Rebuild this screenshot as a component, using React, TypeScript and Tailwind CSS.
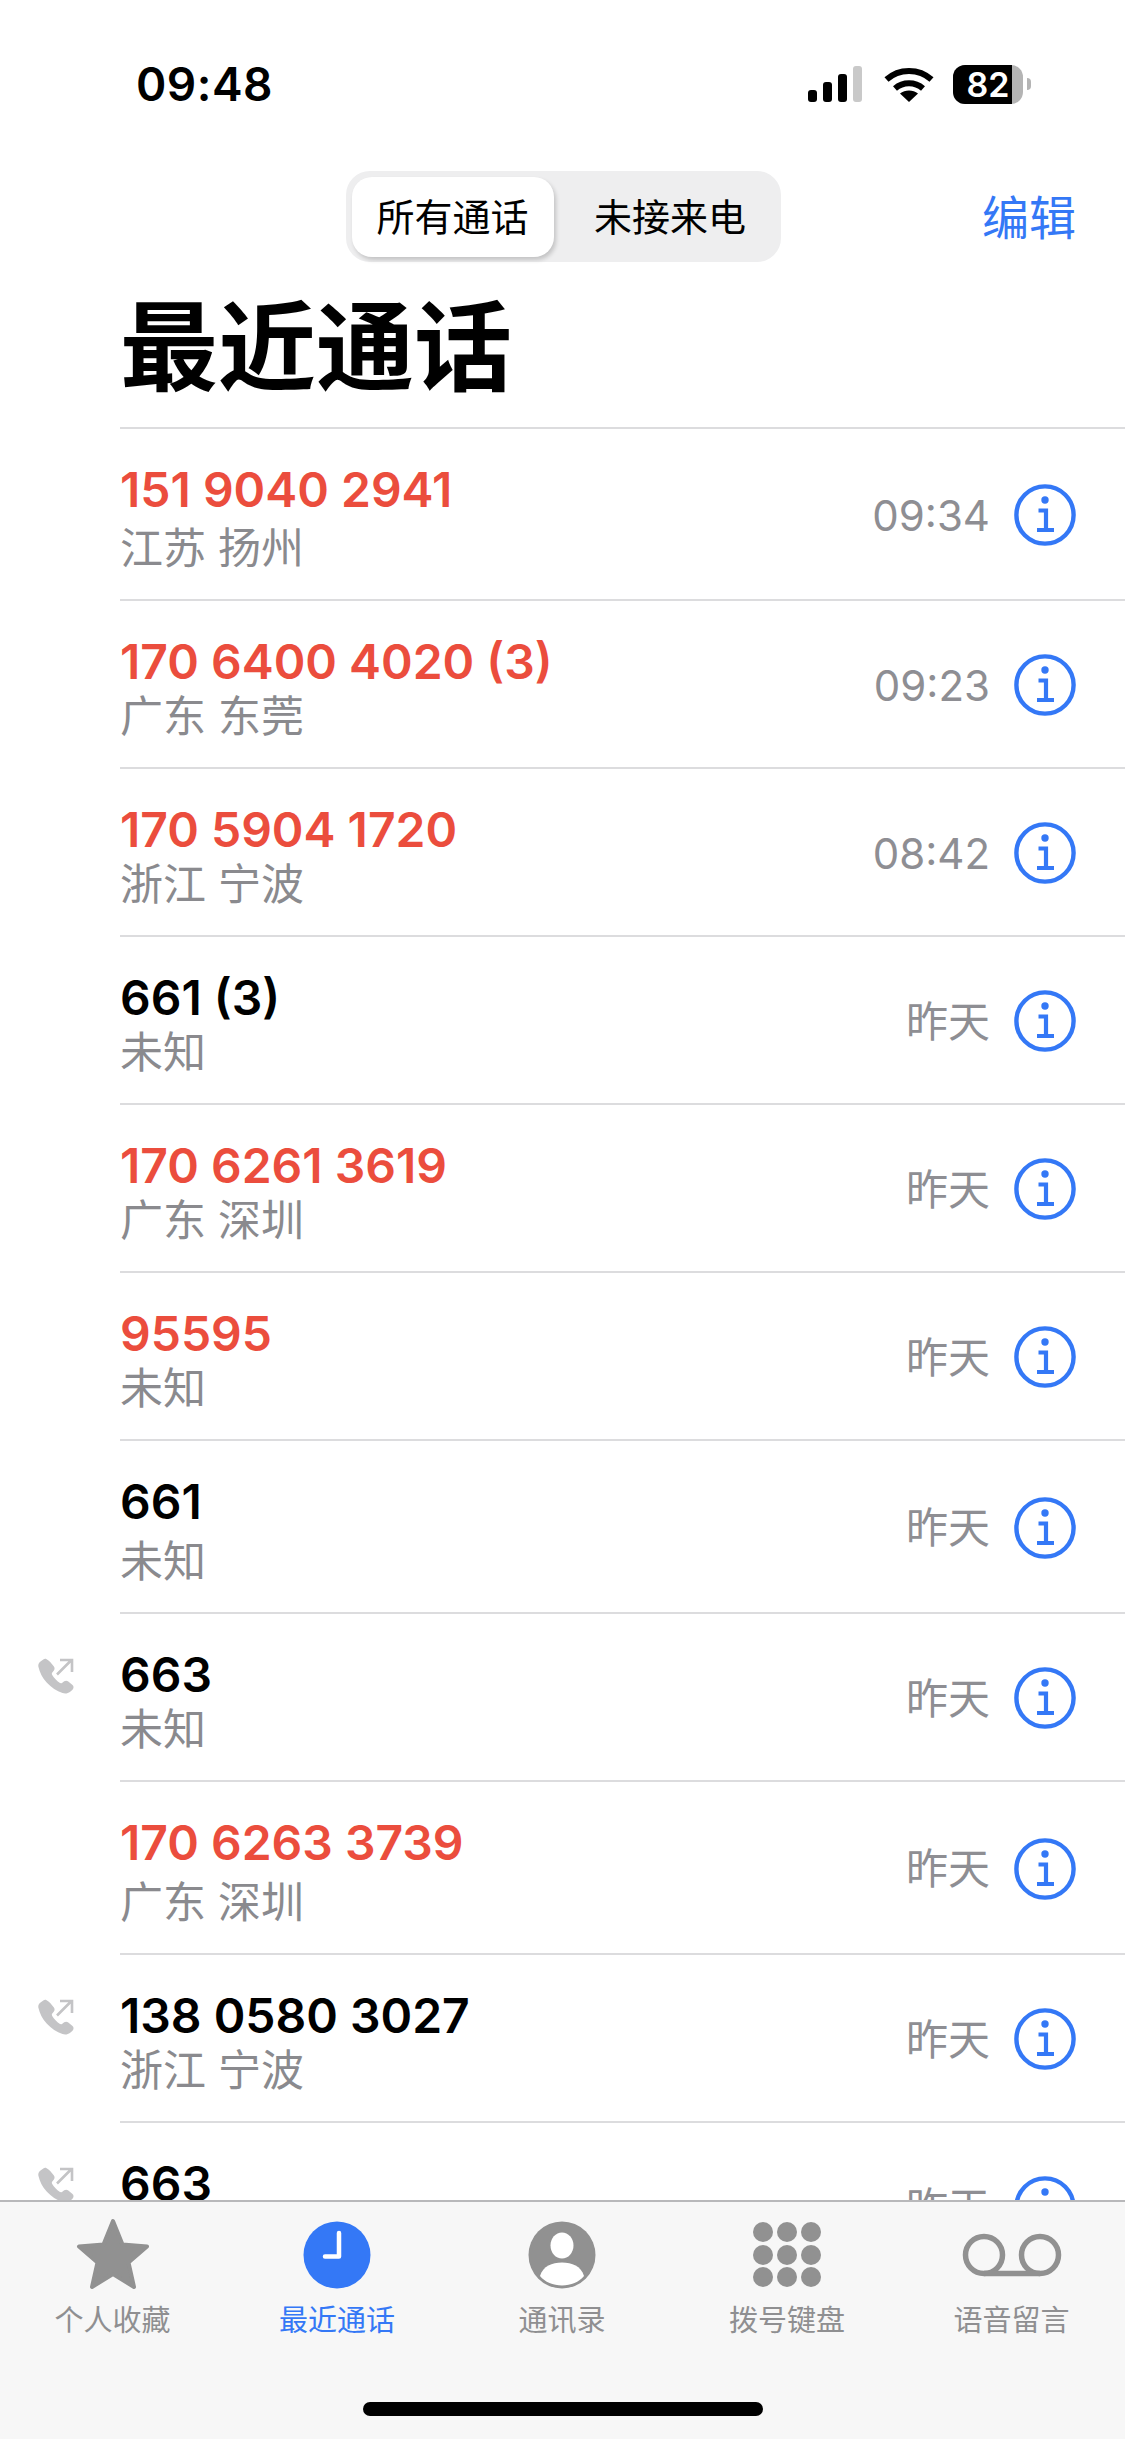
import React from 'react';

const sans = '[font-family:Inter,"Noto_Sans_CJK_SC",sans-serif]';

interface CallRow {
  name: string;
  sub?: string;
  time: string;
  missed?: boolean;
  outgoing?: boolean;
  subGap?: string;
}

const calls: CallRow[] = [
  { name: '151 9040 2941', sub: '江苏 扬州', time: '09:34', missed: true, subGap: 'mt-[2px]' },
  { name: '170 6400 4020 (3)', sub: '广东 东莞', time: '09:23', missed: true },
  { name: '170 5904 1720', sub: '浙江 宁波', time: '08:42', missed: true },
  { name: '661 (3)', sub: '未知', time: '昨天' },
  { name: '170 6261 3619', sub: '广东 深圳', time: '昨天', missed: true },
  { name: '95595', sub: '未知', time: '昨天', missed: true },
  { name: '661', sub: '未知', time: '昨天', subGap: 'mt-[3px]' },
  { name: '663', sub: '未知', time: '昨天', outgoing: true },
  { name: '170 6263 3739', sub: '广东 深圳', time: '昨天', missed: true, subGap: 'mt-[3px]' },
  { name: '138 0580 3027', sub: '浙江 宁波', time: '昨天', outgoing: true },
  { name: '663', sub: '未知', time: '昨天', outgoing: true },
];

const InfoIcon = () => (
  <svg viewBox="0 0 62 62" className="w-[62px] h-[62px] text-[#3478f6]" fill="none">
    <circle cx="31" cy="31" r="28.6" stroke="currentColor" strokeWidth="4.4" />
    <circle cx="31" cy="16" r="3.7" fill="currentColor" />
    <path d="M24.500 26.500h7.500v19.500M23 46h17" stroke="currentColor" strokeWidth="4.2" />
  </svg>
);

const OutgoingIcon = () => (
  <svg viewBox="0 0 36 36" className="w-[36px] h-[36px] text-[#c4c4c6]" fill="none">
    <path
      fill="currentColor"
      d="M8.6 1.2c-1-.6-2.3-.5-3.3.2L2.2 3.8C.6 5 0 6.9.4 8.8c1.2 5.4 3.9 11 8.5 16 4.4 4.8 9.8 8.4 15.6 10.2 2.5.8 5.3.6 7.7-1.3l2.3-2c1.4-1.3 1.4-3.4 0-4.7l-4.2-3.5c-1.2-1-2.9-1-4.1-.2l-2.2 1.6c-.8.5-1.6.4-2.4-.1-2.7-1.9-5.6-5-7.4-7.9-.5-.9-.5-1.8.1-2.5l1.6-2c.9-1.2.9-2.8 0-4L12.2 4c-1-1.2-2.4-2.2-3.6-2.8z"
    />
    <path d="M19 16.500 33 2.500M22 2h12v12" stroke="currentColor" strokeWidth="2.6" />
  </svg>
);

const StatusIcons = () => (
  <div className="flex items-center">
    <svg viewBox="0 0 56 36" className="w-[56px] h-[36px]">
      <rect x="1" y="24" width="9" height="12" rx="3" fill="#000" />
      <rect x="16" y="16" width="9" height="20" rx="3" fill="#000" />
      <rect x="31" y="8" width="9" height="28" rx="3" fill="#000" />
      <rect x="46" y="0" width="9" height="36" rx="3" fill="#c9c9c9" />
    </svg>
    <svg viewBox="0 0 50 36" className="ml-[21px] w-[50px] h-[36px]" fill="none">
      <path d="M2.500 13.500C15 2 35 2 47.500 13.500" stroke="#000" strokeWidth="6" />
      <path d="M11 22.500c8-7 20-7 28 0" stroke="#000" strokeWidth="6" />
      <path d="M25 36 16 27.500c5-4 13-4 18 0z" fill="#000" />
    </svg>
    <div className="ml-[19px] w-[70px] h-[39px] rounded-[12px] bg-[#b4b4b4]">
      <div className="w-[59px] h-[39px] pl-[11px] rounded-l-[12px] bg-black text-center leading-[39px] text-[34px] font-semibold text-white">82</div>
    </div>
    <div className="ml-[4px] w-[4px] h-[12px] rounded-r-full bg-[#b4b4b4]" />
  </div>
);

const Row = ({ row }: { row: CallRow }) => (
  <div className="flex">
    <div className="w-[120px] shrink-0 pl-[38px] pt-[44px]">{row.outgoing && <OutgoingIcon />}</div>
    <div className="flex-1 flex items-center border-b-2 border-[#dcdcde] pr-[49px] pt-[2px]">
      <div className="flex-1 min-w-0 pt-[30px] pb-[24px]">
        <div className={`h-[58px] leading-[58px] text-[48px] font-semibold ${row.missed ? 'text-[#eb4d3d]' : 'text-black'}`}>{row.name}</div>
        <div className={`h-[54px] leading-[54px] text-[43px] text-[#8a8a8e] ${row.subGap ?? '-mt-[2px]'}`}>{row.sub}</div>
      </div>
      <span className="mr-[24px] text-[42px] text-[#8e8e93]">{row.time}</span>
      <InfoIcon />
    </div>
  </div>
);

const tabs = [
  {
    label: '个人收藏',
    icon: (
      <svg viewBox="0 0 74 72" className="w-[74px] h-[72px]">
        <path d="M37 3 46.500 26.500 71 28.500 52.500 44.500 58 69 37 56 16 69 21.500 44.500 3 28.500 27.500 26.500z" fill="#919191" stroke="#919191" strokeWidth="4" strokeLinejoin="round" />
      </svg>
    ),
  },
  {
    label: '最近通话',
    active: true,
    icon: (
      <svg viewBox="0 0 72 72" className="w-[72px] h-[72px]" fill="none">
        <circle cx="36" cy="37" r="33.500" fill="#3478f6" />
        <path d="M38 15v23.500H24" stroke="#fff" strokeWidth="4.5" strokeLinecap="round" strokeLinejoin="round" />
      </svg>
    ),
  },
  {
    label: '通讯录',
    icon: (
      <svg viewBox="0 0 72 72" className="w-[72px] h-[72px]">
        <circle cx="36" cy="37" r="33.500" fill="#919191" />
        <ellipse cx="36" cy="27.500" rx="11.500" ry="13" fill="#fff" />
        <path d="M14 58c3-10 12-13.500 22-13.500S55 48 58 58c-5 6-13 9.500-22 9.500S19 64 14 58z" fill="#fff" />
      </svg>
    ),
  },
  {
    label: '拨号键盘',
    icon: (
      <svg viewBox="0 0 72 72" className="w-[72px] h-[72px]" fill="#919191">
        {[12, 36, 60].map(cx =>
          [14, 37, 59].map(cy => <circle key={`${cx}-${cy}`} cx={cx} cy={cy} r="10" />)
        )}
      </svg>
    ),
  },
  {
    label: '语音留言',
    icon: (
      <svg viewBox="0 0 100 72" className="w-[100px] h-[72px]" fill="none" stroke="#919191" strokeWidth="5.5">
        <circle cx="22" cy="37" r="18.500" />
        <circle cx="78" cy="37" r="18.500" />
        <path d="M22 55.500h56" />
      </svg>
    ),
  },
];

export default function App() {
  return (
    <div className={`relative w-[1125px] h-[2439px] overflow-hidden bg-white ${sans}`}>
      <div className="flex items-center justify-between pl-[136px] pr-[94px] pt-[56px] h-[171px] pb-[59px]">
        <span className="text-[46px] font-semibold text-black tracking-[0.5px]">09:48</span>
        <StatusIcons />
      </div>

      <div className="relative flex justify-center h-[91px] pl-[1px]">
        <div className="flex w-[435px] h-[91px] p-[6px] rounded-[24px] bg-[#eeeeef]">
          <div className="w-[202px] h-[80px] rounded-[20px] bg-white shadow-[2px_3px_4px_rgba(0,0,0,0.18)] text-center leading-[80px] text-[38px] text-black">所有通话</div>
          <div className="flex-1 pl-[12px] text-center leading-[80px] text-[38px] text-black">未接来电</div>
        </div>
        <span className="absolute right-[49px] top-[19px] text-[47px] leading-[56px] text-[#3478f6]">编辑</span>
      </div>

      <h1 className="ml-[120px] mt-[25px] h-[140px] text-[98px] leading-[122px] font-bold text-black">最近通话</h1>

      <div className="ml-[120px] h-[2px] bg-[#dcdcde]" />
      <div>
        {calls.map((row, i) => (
          <Row key={i} row={row} />
        ))}
      </div>

      <div className="absolute left-0 right-0 bottom-0 h-[239px] bg-[#f7f7f7] border-t-2 border-[#b8b8ba]">
        <div className="grid grid-cols-[225px_224px_226px_224px_225px] pt-[14px]">
          {tabs.map(t => (
            <div key={t.label} className="flex flex-col items-center">
              <div className="h-[76px] flex items-center justify-center">{t.icon}</div>
              <span className={`mt-[9px] text-[29px] leading-[40px] ${t.active ? 'text-[#3478f6]' : 'text-[#8f8f91]'}`}>{t.label}</span>
            </div>
          ))}
        </div>
        <div className="absolute left-[363px] top-[200px] w-[400px] h-[14px] rounded-full bg-black" />
      </div>
    </div>
  );
}
